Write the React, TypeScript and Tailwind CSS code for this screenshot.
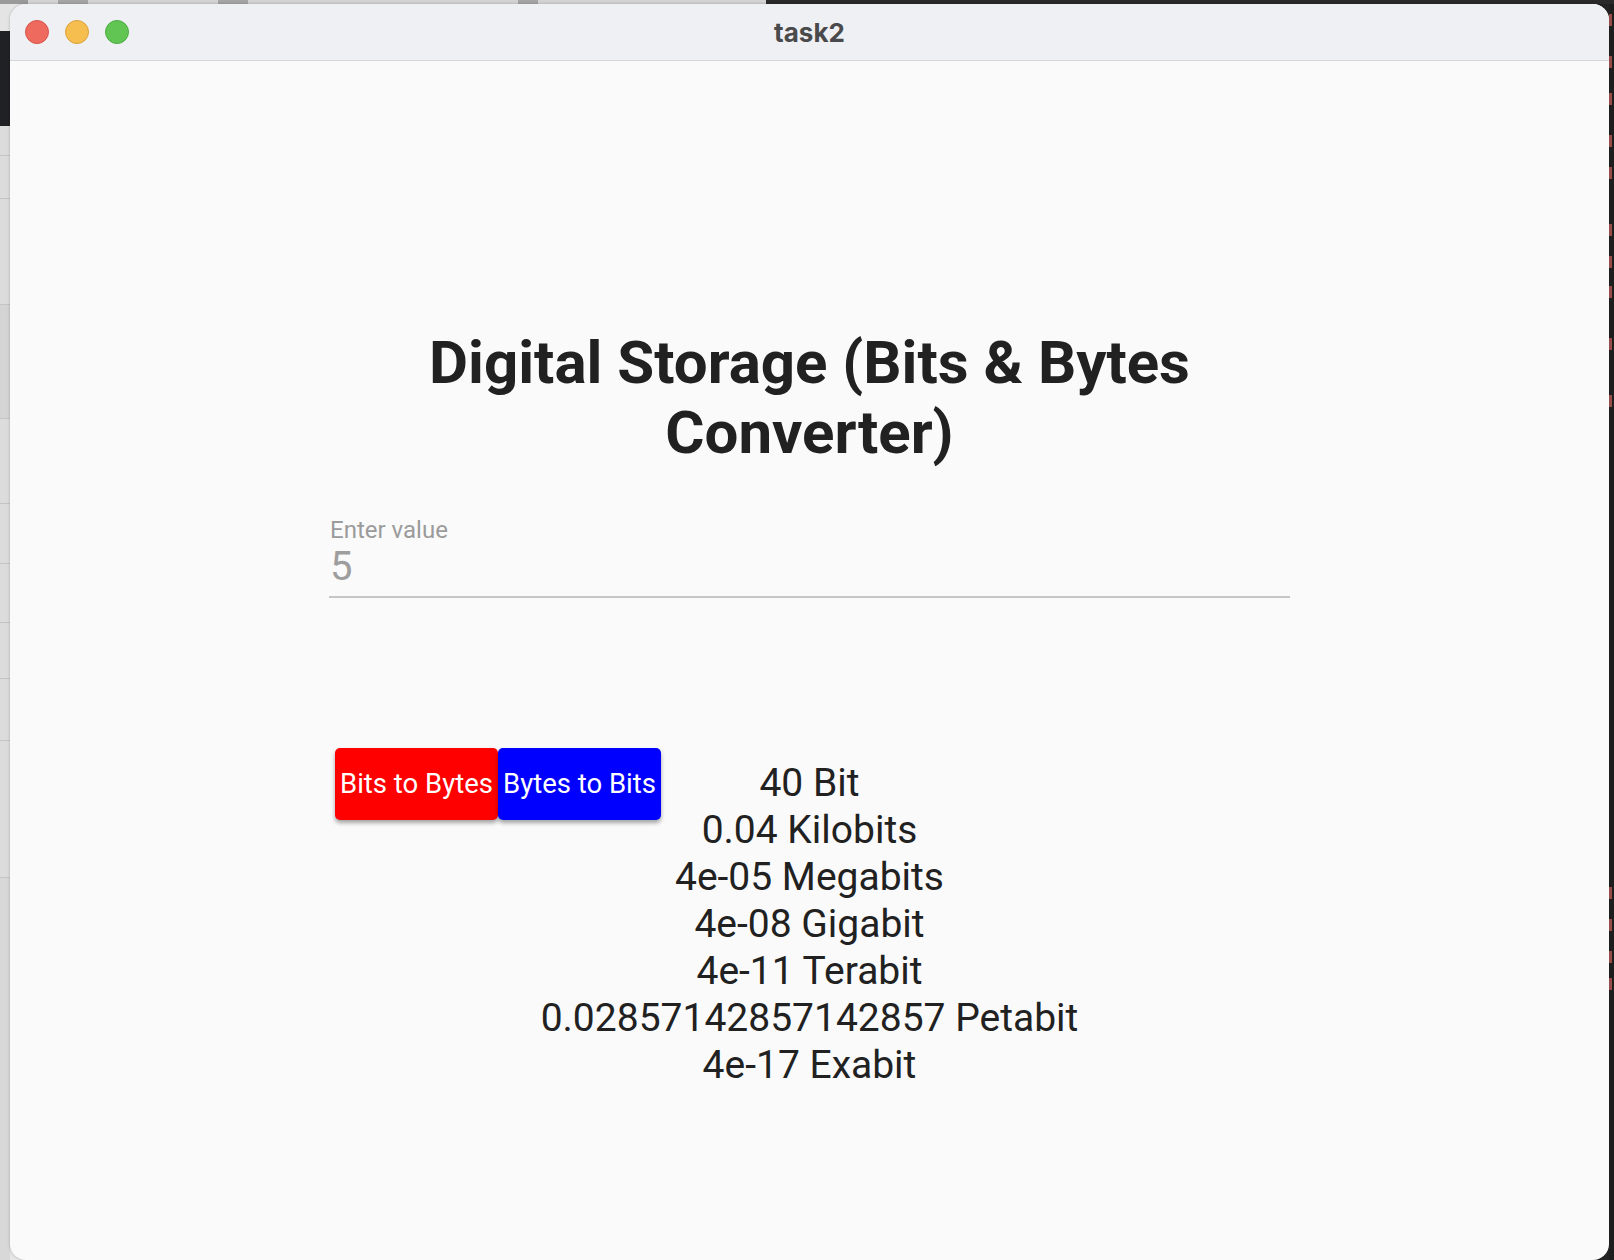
import React from "react";

const results = [
  "40 Bit",
  "0.04 Kilobits",
  "4e-05 Megabits",
  "4e-08 Gigabit",
  "4e-11 Terabit",
  "0.02857142857142857 Petabit",
  "4e-17 Exabit",
];

function LeftStrip() {
  const segs = [
    { h: 27, c: "bg-[#e4e4e4]" },
    { h: 95, c: "bg-[#1f2124]" },
    { h: 30, c: "bg-[#dcdcdc] border-b border-[#c4c4c4]" },
    { h: 43, c: "bg-[#dcdcdc] border-b border-[#c4c4c4]" },
    { h: 106, c: "bg-[#dcdcdc] border-b border-[#c4c4c4]" },
    { h: 114, c: "bg-[#d4d4d4] border-b border-[#c4c4c4]" },
    { h: 85, c: "bg-[#dcdcdc] border-b border-[#c4c4c4]" },
    { h: 60, c: "bg-[#dcdcdc] border-b border-[#c4c4c4]" },
    { h: 59, c: "bg-[#dcdcdc] border-b border-[#c4c4c4]" },
    { h: 56, c: "bg-[#dcdcdc] border-b border-[#c4c4c4]" },
    { h: 62, c: "bg-[#dcdcdc] border-b border-[#c4c4c4]" },
    { h: 137, c: "bg-[#dcdcdc] border-b border-[#c4c4c4]" },
  ];
  return (
    <div className="w-[10px] flex flex-col shrink-0">
      {segs.map((s, i) => (
        <div key={i} className={s.c} style={{ height: s.h }} />
      ))}
      <div className="flex-1 bg-[#d8d8d8]" />
    </div>
  );
}

function RightStrip() {
  const gaps = [10, 30, 25, 30, 20, 45, 20, 18, 40, 45, 480, 20, 20, 15];
  return (
    <div className="w-[5px] shrink-0 bg-[#1e1e1e] flex flex-col">
      {gaps.map((g, i) => (
        <div key={i} className="flex flex-col">
          <div style={{ height: g }} />
          <div className="h-[12px] w-[3px] bg-[#c9605a] opacity-70" />
        </div>
      ))}
    </div>
  );
}

export default function App() {
  return (
    <div
      className="w-[1614px] h-[1260px] overflow-hidden flex flex-col bg-[linear-gradient(to_right,#e6e6e6_0%,#e6e6e6_48%,#242424_48%,#242424_100%)]"
      style={{ fontFamily: "Roboto, 'Noto Sans', sans-serif" }}
    >
      {/* top strip of background apps */}
      <div className="h-[4px] flex shrink-0">
        <div className="w-[766px] bg-[#d3d3d3] flex">
          <div className="w-[28px] bg-[#9a9a9a]" />
          <div className="w-[30px]" />
          <div className="w-[30px] bg-[#a5a5a5]" />
          <div className="w-[130px]" />
          <div className="w-[30px] bg-[#a5a5a5]" />
          <div className="w-[270px]" />
          <div className="w-[20px] bg-[#a5a5a5]" />
        </div>
        <div className="flex-1 bg-[#2a2a2a]" />
      </div>

      <div className="flex flex-1">
        <LeftStrip />

        {/* window */}
        <div className="flex-1 flex flex-col rounded-[16px] overflow-hidden bg-[#fafafa] shadow-[0_0_3px_rgba(0,0,0,0.25)]">
          {/* title bar */}
          <div className="h-[57px] shrink-0 bg-[#eff0f3] border-b border-[#d6d6d8] grid grid-cols-[minmax(0,1fr)_auto_minmax(0,1fr)] items-center">
            <div className="flex items-center gap-[16px] pl-[15px]">
              <div className="w-[24px] h-[24px] rounded-full bg-[#ee6a5f] border border-[#d5554b]" />
              <div className="w-[24px] h-[24px] rounded-full bg-[#f5be4f] border border-[#d9a13a]" />
              <div className="w-[24px] h-[24px] rounded-full bg-[#61c554] border border-[#4ea943]" />
            </div>
            <div
              className="text-center text-[26px] font-bold text-[#4a4a4c]"
              style={{ fontFamily: "Inter, Roboto, sans-serif" }}
            >
              task2
            </div>
            <div />
          </div>

          {/* content */}
          <div className="flex-1 flex flex-col items-center pt-[267px]">
            <h1 className="w-[961px] text-center text-[60px] leading-[70px] font-bold text-[#212121]">
              Digital Storage (Bits &amp; Bytes Converter)
            </h1>

            <div className="w-[961px] mt-[48px] flex flex-col">
              <div className="pl-[1px] text-[24px] leading-[28px] text-[#9b9b9b]">Enter value</div>
              <div className="pl-[1px] text-[40px] leading-[46px] text-[#9e9e9e] pb-[6px] border-b-2 border-[#c6c6c6]">
                5
              </div>
            </div>

            <div className="w-[961px] mt-[150px] grid grid-cols-[minmax(0,1fr)_auto_minmax(0,1fr)]">
              <div className="flex items-start pl-[6px]">
                <button className="w-[163px] h-[72px] shrink-0 rounded-[5px] bg-[#ff0000] text-white text-[27.5px] flex items-center justify-center shadow-[0_3px_4px_rgba(0,0,0,0.35)] whitespace-nowrap">
                  Bits to Bytes
                </button>
                <button className="w-[163px] h-[72px] shrink-0 rounded-[5px] bg-[#0000ff] text-white text-[27.5px] flex items-center justify-center shadow-[0_3px_4px_rgba(0,0,0,0.35)] whitespace-nowrap">
                  Bytes to Bits
                </button>
              </div>
              <div className="mt-[12px] flex flex-col items-center">
                {results.map((r) => (
                  <div key={r} className="text-[39px] leading-[47px] text-[#212121] whitespace-nowrap">
                    {r}
                  </div>
                ))}
              </div>
              <div />
            </div>
          </div>
        </div>

        <RightStrip />
      </div>
    </div>
  );
}
